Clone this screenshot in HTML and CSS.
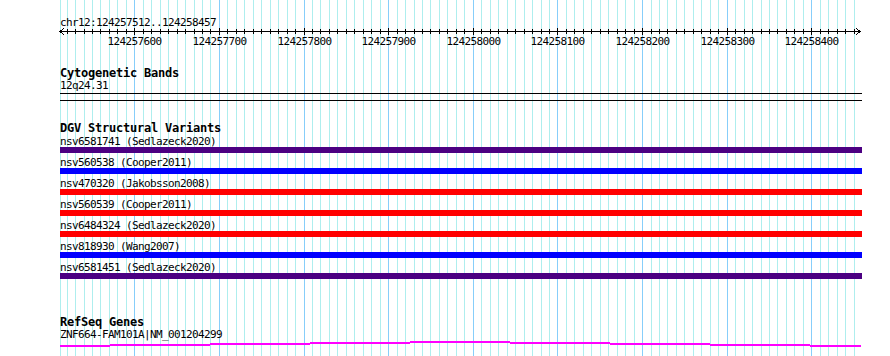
FILE: index.html
```html
<!DOCTYPE html>
<html>
<head>
<meta charset="utf-8">
<title>chr12:124257512..124258457</title>
<link rel="stylesheet" href="styles.css">
</head>
<body>
<div class="browser">
  <svg class="grid" width="890" height="356" viewBox="0 0 890 356" aria-hidden="true">
    <path class="minor" d="M60.5 0v356M67.5 0v356M75.5 0v356M84.5 0v356M92.5 0v356M100.5 0v356M109.5 0v356M117.5 0v356M126.5 0v356M143.5 0v356M151.5 0v356M160.5 0v356M168.5 0v356M177.5 0v356M185.5 0v356M194.5 0v356M202.5 0v356M210.5 0v356M227.5 0v356M236.5 0v356M244.5 0v356M253.5 0v356M261.5 0v356M270.5 0v356M278.5 0v356M287.5 0v356M295.5 0v356M312.5 0v356M320.5 0v356M329.5 0v356M337.5 0v356M346.5 0v356M354.5 0v356M363.5 0v356M371.5 0v356M380.5 0v356M397.5 0v356M405.5 0v356M414.5 0v356M422.5 0v356M430.5 0v356M439.5 0v356M447.5 0v356M456.5 0v356M464.5 0v356M481.5 0v356M490.5 0v356M498.5 0v356M507.5 0v356M515.5 0v356M524.5 0v356M532.5 0v356M541.5 0v356M549.5 0v356M566.5 0v356M574.5 0v356M583.5 0v356M591.5 0v356M600.5 0v356M608.5 0v356M617.5 0v356M625.5 0v356M634.5 0v356M651.5 0v356M659.5 0v356M667.5 0v356M676.5 0v356M684.5 0v356M693.5 0v356M701.5 0v356M710.5 0v356M718.5 0v356M735.5 0v356M744.5 0v356M752.5 0v356M761.5 0v356M769.5 0v356M777.5 0v356M786.5 0v356M794.5 0v356M803.5 0v356M820.5 0v356M828.5 0v356M837.5 0v356M845.5 0v356M854.5 0v356"/>
    <path class="major" d="M134.5 0v356M219.5 0v356M304.5 0v356M388.5 0v356M473.5 0v356M557.5 0v356M642.5 0v356M727.5 0v356M811.5 0v356"/>
  </svg>

  <div class="panel">
    <div class="chr">chr12:124257512..124258457</div>

    <svg class="ruler" width="890" height="22" viewBox="0 0 890 22">
      <path class="axis" d="M60 3.5H860M64 0L60 3.5L64 7M856 0L860 3.5L856 7"/>
      <path class="tick" d="M67.5 1v5M75.5 1v5M84.5 1v5M92.5 1v5M100.5 1v5M109.5 1v5M117.5 1v5M126.5 1v5M143.5 1v5M151.5 1v5M160.5 1v5M168.5 1v5M177.5 1v5M185.5 1v5M194.5 1v5M202.5 1v5M210.5 1v5M227.5 1v5M236.5 1v5M244.5 1v5M253.5 1v5M261.5 1v5M270.5 1v5M278.5 1v5M287.5 1v5M295.5 1v5M312.5 1v5M320.5 1v5M329.5 1v5M337.5 1v5M346.5 1v5M354.5 1v5M363.5 1v5M371.5 1v5M380.5 1v5M397.5 1v5M405.5 1v5M414.5 1v5M422.5 1v5M430.5 1v5M439.5 1v5M447.5 1v5M456.5 1v5M464.5 1v5M481.5 1v5M490.5 1v5M498.5 1v5M507.5 1v5M515.5 1v5M524.5 1v5M532.5 1v5M541.5 1v5M549.5 1v5M566.5 1v5M574.5 1v5M583.5 1v5M591.5 1v5M600.5 1v5M608.5 1v5M617.5 1v5M625.5 1v5M634.5 1v5M651.5 1v5M659.5 1v5M667.5 1v5M676.5 1v5M684.5 1v5M693.5 1v5M701.5 1v5M710.5 1v5M718.5 1v5M735.5 1v5M744.5 1v5M752.5 1v5M761.5 1v5M769.5 1v5M777.5 1v5M786.5 1v5M794.5 1v5M803.5 1v5M820.5 1v5M828.5 1v5M837.5 1v5M845.5 1v5M854.5 1v5M134.5 0v7M219.5 0v7M304.5 0v7M388.5 0v7M473.5 0v7M557.5 0v7M642.5 0v7M727.5 0v7M811.5 0v7"/>
      <g class="nums">
        <text x="134.5" y="17">124257600</text>
        <text x="219.5" y="17">124257700</text>
        <text x="304.5" y="17">124257800</text>
        <text x="388.5" y="17">124257900</text>
        <text x="473.5" y="17">124258000</text>
        <text x="557.5" y="17">124258100</text>
        <text x="642.5" y="17">124258200</text>
        <text x="727.5" y="17">124258300</text>
        <text x="811.5" y="17">124258400</text>
      </g>
    </svg>

    <section class="track cyto">
      <div class="ttl">Cytogenetic Bands</div>
      <div class="lbl">12q24.31</div>
      <div class="band"></div>
    </section>

    <section class="track dgv">
      <div class="ttl">DGV Structural Variants</div>
      <div class="feat"><div class="lbl">nsv6581741 (Sedlazeck2020)</div><div class="bar indigo"></div></div>
      <div class="feat"><div class="lbl">nsv560538 (Cooper2011)</div><div class="bar blue"></div></div>
      <div class="feat"><div class="lbl">nsv470320 (Jakobsson2008)</div><div class="bar red"></div></div>
      <div class="feat"><div class="lbl">nsv560539 (Cooper2011)</div><div class="bar red"></div></div>
      <div class="feat"><div class="lbl">nsv6484324 (Sedlazeck2020)</div><div class="bar red"></div></div>
      <div class="feat"><div class="lbl">nsv818930 (Wang2007)</div><div class="bar blue"></div></div>
      <div class="feat"><div class="lbl">nsv6581451 (Sedlazeck2020)</div><div class="bar indigo"></div></div>
    </section>

    <section class="track refseq">
      <div class="ttl">RefSeq Genes</div>
      <div class="lbl">ZNF664-FAM101A|NM_001204299</div>
      <svg class="gene" width="802" height="8" viewBox="0 0 802 8">
        <rect x="0" y="5" width="50" height="2"/>
        <rect x="50" y="4" width="100" height="2"/>
        <rect x="150" y="3" width="100" height="2"/>
        <rect x="250" y="2" width="100" height="2"/>
        <rect x="350" y="1" width="100" height="2"/>
        <rect x="450" y="2" width="100" height="2"/>
        <rect x="550" y="3" width="100" height="2"/>
        <rect x="650" y="4" width="100" height="2"/>
        <rect x="750" y="5" width="51" height="2"/>
      </svg>
    </section>
  </div>
</div>
</body>
</html>
```
FILE: styles.css
```css
html, body {
  margin: 0;
  padding: 0;
  background: #ffffff;
}

.browser {
  position: relative;
  width: 890px;
  height: 356px;
  overflow: hidden;
  background: #ffffff;
  color: #000000;
  font-family: "DejaVu Sans Mono", "Liberation Mono", monospace;
}

.grid {
  position: absolute;
  left: 0;
  top: 0;
  display: block;
}

.grid .minor {
  stroke: #aeeeee;
  stroke-width: 1;
  fill: none;
}

.grid .major {
  stroke: #87cefa;
  stroke-width: 1;
  fill: none;
}

.panel {
  position: relative;
  display: flex;
  flex-direction: column;
}

.chr {
  margin: 17px 0 0 60px;
  height: 11px;
  line-height: 11px;
  font-size: 11px;
  letter-spacing: -0.62px;
  white-space: pre;
}

.ruler {
  display: block;
}

.ruler .axis,
.ruler .tick {
  stroke: #000000;
  stroke-width: 1;
  fill: none;
  shape-rendering: crispEdges;
}

.ruler .nums text {
  font-family: "DejaVu Sans Mono", "Liberation Mono", monospace;
  font-size: 11px;
  letter-spacing: -0.62px;
  text-anchor: middle;
  fill: #000000;
}

.track {
  display: flex;
  flex-direction: column;
  padding-left: 60px;
}

.ttl {
  height: 11px;
  line-height: 11px;
  font-size: 12px;
  font-weight: bold;
  letter-spacing: -0.22px;
  white-space: pre;
}

.lbl {
  height: 11px;
  line-height: 11px;
  font-size: 11px;
  letter-spacing: -0.62px;
  white-space: pre;
}

.cyto {
  margin-top: 18px;
}

.cyto .ttl {
  margin-bottom: 1px;
}

.band {
  box-sizing: border-box;
  width: 802px;
  height: 8px;
  margin-top: 2px;
  border-top: 1px solid #000000;
  border-bottom: 1px solid #000000;
}

.dgv {
  margin-top: 22px;
}

.dgv .ttl {
  margin-bottom: 2px;
}

.feat {
  display: flex;
  flex-direction: column;
  padding-bottom: 4px;
}

.bar {
  width: 802px;
  height: 6px;
}

.bar.indigo { background: #4b0082; }
.bar.blue   { background: #0000ff; }
.bar.red    { background: #ff0000; }

.refseq {
  margin-top: 34px;
}

.refseq .ttl {
  margin-bottom: 1px;
}

.gene {
  display: block;
}

.gene rect {
  fill: #ff00ff;
}
```
